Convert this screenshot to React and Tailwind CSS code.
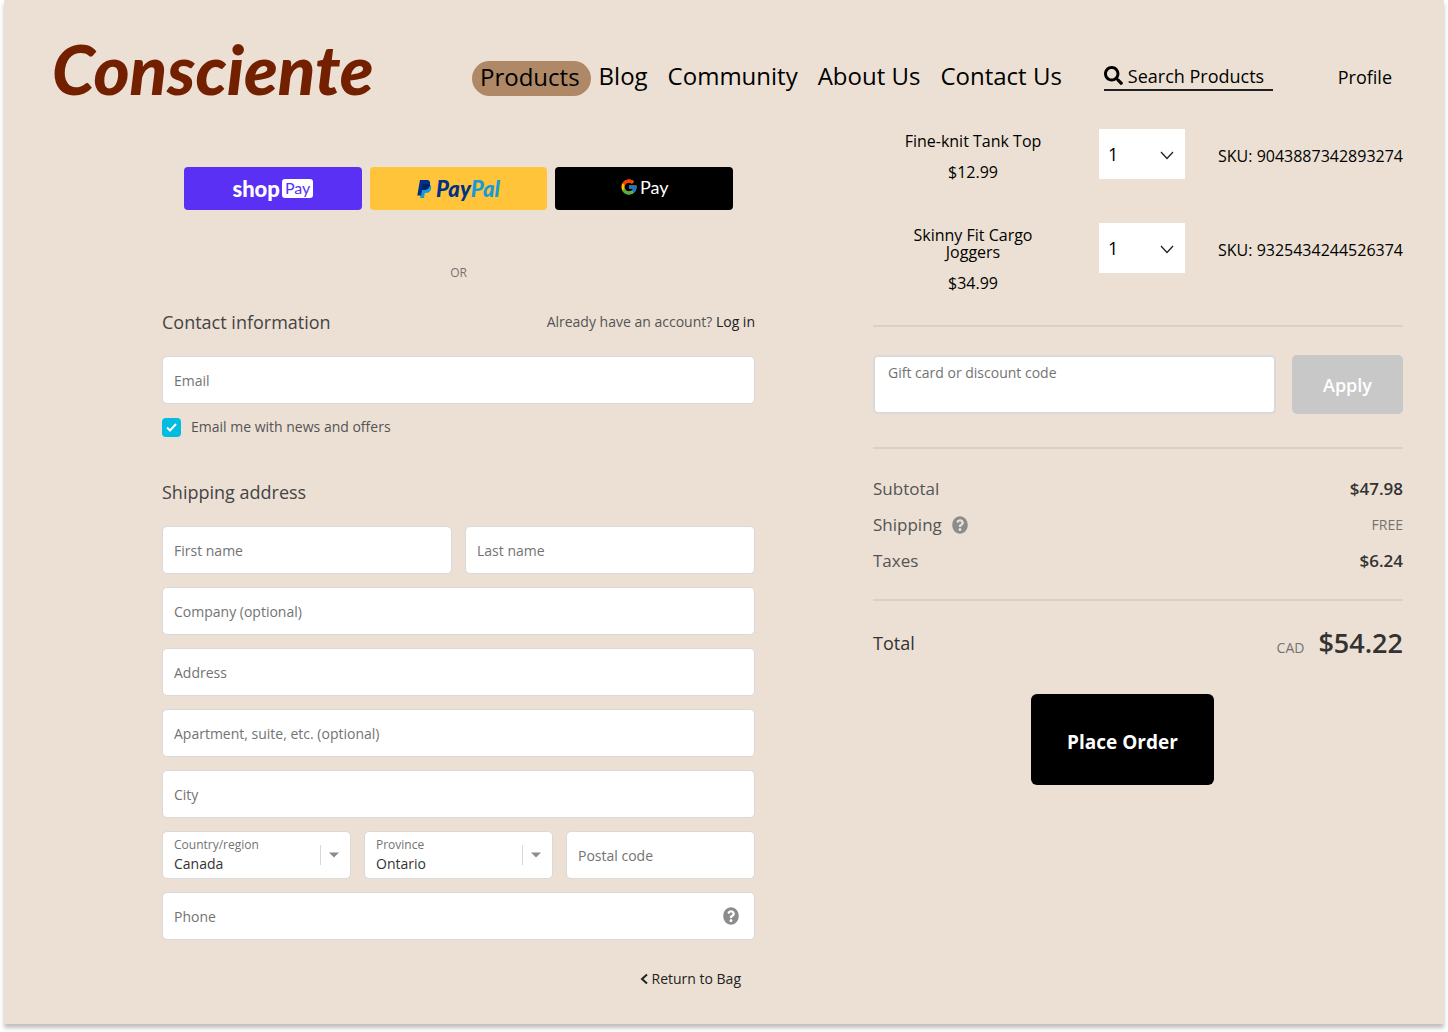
import React, { useState } from 'react';
import { FaSearch, FaQuestionCircle } from 'react-icons/fa';
import { FcGoogle } from 'react-icons/fc';

const links = ['Blog', 'Community', 'About Us', 'Contact Us'];

const items = [
  { name: 'Fine-knit Tank Top', price: '$12.99', sku: '9043887342893274' },
  { name: 'Skinny Fit Cargo Joggers', price: '$34.99', sku: '9325434244526374' },
];

function Help() {
  return (
    <FaQuestionCircle preserveAspectRatio="none" className="w-4 h-[18px] text-[#8c8c8c]" />
  );
}

function Field({ label, id, type = 'text' }) {
  return (
    <input
      id={id}
      type={type}
      aria-label={label}
      placeholder={label}
      className="block w-full h-12 px-[11px] text-sm rounded-[5px] border border-[#d9d9d9] bg-white text-[#333333] placeholder-[#737373] outline-none"
    />
  );
}

function SelectField({ label, id, options }) {
  return (
    <div className="relative">
      <label htmlFor={id} className="absolute left-3 top-[6px] text-xs text-[#737373]">{label}</label>
      <select
        id={id}
        className="appearance-none block w-full h-12 pl-[11px] pr-10 pt-[18px] text-sm rounded-[5px] border border-[#d9d9d9] bg-white text-[#333333] outline-none"
      >
        {options.map((o) => <option key={o}>{o}</option>)}
      </select>
      <div className="absolute right-3 top-[14px] h-5 pl-2 border-l border-[#d9d9d9] flex items-center pointer-events-none">
        <svg width="10" height="6" viewBox="0 0 10 6" fill="#8c8c8c"><path d="M0 0.5h10L5 5.5z" /></svg>
      </div>
    </div>
  );
}

function PayPalMark() {
  return (
    <svg width="15" height="18" viewBox="0 0 15 18">
      <path d="M5 4h6.5C14 4.500 14.500 6.500 14 9c-.6 2.800-2.400 4-5 4H7.800L7 18H3.200z" fill="#179bd7" />
      <path d="M3 0h6.500C12.500 0 13.500 2 13 4.800 12.400 8.500 10 9.800 7 9.800H5.200L4.100 15.500H0.300z" fill="#003087" />
      <path d="M5.600 4.300h6.600c.5 0 .7.300.6.900C12.200 8.500 10 9.800 7 9.800H4.800z" fill="#001f66" />
    </svg>
  );
}

function Header() {
  return (
    <header className="flex items-center h-[129px] pt-6 pl-[48px] pr-[52px] text-black whitespace-nowrap">
      <a href="#" className="w-[420px] pb-4 font-['Lato'] font-black italic text-[69px] leading-none text-[#732000]">Consciente</a>
      <nav className="flex items-start gap-2 pt-1 text-2xl">
        <a href="#" className="h-[35px] pl-2 pr-[11px] leading-8 rounded-full bg-[#af8867]">Products</a>
        <div className="flex gap-5 leading-[30px]">
          {links.map((l) => <a key={l} href="#">{l}</a>)}
        </div>
      </nav>
      <div className="ml-[42px] w-[169px] h-7 flex items-center gap-[5px] border-b-2 border-[#222222]">
        <FaSearch className="size-[19px] shrink-0" />
        <input type="text" aria-label="Search Products" placeholder="Search Products" className="w-full min-w-0 text-lg leading-6 placeholder-black outline-none bg-transparent" />
      </div>
      <a href="#" className="ml-auto text-lg">Profile</a>
    </header>
  );
}

function Checkout() {
  const [news, setNews] = useState(true);

  return (
    <form className="pt-[33px] text-sm text-[#545454]" onSubmit={(e) => e.preventDefault()}>
      <div className="grid grid-cols-3 gap-2 px-[21px] pt-[5px] pb-[22px] rounded-b-[5px] border border-t-0 border-[#e5e1dd]">
        <button type="button" className="h-[43px] flex items-center justify-center gap-[2px] rounded-[4px] bg-[#5a31f4] font-['Lato'] text-white">
          <span className="text-[22px] leading-5 font-black">shop</span>
          <span className="px-[3px] h-[19px] leading-[18px] text-base rounded-[3px] bg-white text-[#5a31f4]">Pay</span>
        </button>
        <button type="button" aria-label="PayPal" className="h-[43px] flex items-center justify-center gap-1 rounded-[4px] bg-[#ffc439] font-['Lato'] font-black italic text-[22px]">
          <PayPalMark />
          <span className="text-[#003087]">Pay<span className="text-[#179bd7]">Pal</span></span>
        </button>
        <button type="button" className="h-[43px] pb-1 flex items-center justify-center gap-[2px] rounded-[4px] bg-black font-['Lato'] text-lg text-white">
          <FcGoogle className="size-[18px]" />
          <span>Pay</span>
        </button>
      </div>

      <div className="mt-8 flex items-center gap-3 text-xs text-[#737373]">
        <span className="flex-1 border-t border-[#e5e1dd]" />
        OR
        <span className="flex-1 border-t border-[#e5e1dd]" />
      </div>

      <div className="mt-[27px] mb-5 flex items-center justify-between">
        <h2 className="text-lg text-[#444444]">Contact information</h2>
        <p>Already have an account? <a href="#" className="text-[#222222]">Log in</a></p>
      </div>
      <Field id="email" label="Email" type="email" />
      <div className="mt-[13px] flex items-center gap-[10px]">
        <span className="relative size-[19px]">
          <input id="news" type="checkbox" checked={news} onChange={() => setNews(!news)} className="block appearance-none size-[19px] rounded-[4px] bg-[#c8c8c8] checked:bg-[#00bce0]" />
          {news && (
            <svg viewBox="0 0 19 19" className="absolute inset-0 pointer-events-none" fill="none" stroke="#fff" strokeWidth="2"><path d="M5 9.500l3 3 6-6.500" /></svg>
          )}
        </span>
        <label htmlFor="news">Email me with news and offers</label>
      </div>

      <h2 className="mt-[41px] mb-5 text-lg text-[#444444]">Shipping address</h2>
      <div className="grid gap-[13px]">
        <div className="grid grid-cols-2 gap-[13px]">
          <Field id="first" label="First name" />
          <Field id="last" label="Last name" />
        </div>
        <Field id="company" label="Company (optional)" />
        <Field id="address" label="Address" />
        <Field id="apt" label="Apartment, suite, etc. (optional)" />
        <Field id="city" label="City" />
        <div className="grid grid-cols-3 gap-[13px]">
          <SelectField id="country" label="Country/region" options={['Canada', 'United States']} />
          <SelectField id="province" label="Province" options={['Ontario', 'Quebec']} />
          <Field id="postal" label="Postal code" />
        </div>
        <div className="relative">
          <Field id="phone" label="Phone" type="tel" />
          <span className="absolute right-4 top-[15px]"><Help /></span>
        </div>
      </div>
      <a href="#" className="mt-[29px] mr-[14px] flex items-center justify-end gap-1 text-[#222222]">
        <svg width="8" height="12" viewBox="0 0 8 12" fill="none" stroke="currentColor" strokeWidth="2"><path d="M7 1.500L2 6l5 4.500" /></svg>
        Return to Bag
      </a>
    </form>
  );
}

function Summary() {
  return (
    <aside className="text-[17px] leading-6 text-[#545454]">
      <div className="grid gap-[40px] text-base text-black">
        {items.map((item) => (
          <div key={item.sku} className="flex items-start justify-between">
            <div className="w-[200px] px-5 pt-1 text-center leading-[17px]">
              <p>{item.name}</p>
              <p className="mt-[14px]">{item.price}</p>
            </div>
            <div className="relative">
              <select aria-label={'Quantity of ' + item.name} className="appearance-none block w-[86px] h-[50px] px-[9px] text-lg font-medium bg-white outline-none">
                <option>1</option>
                <option>2</option>
              </select>
              <svg className="absolute right-[11px] top-[22px] pointer-events-none" width="14" height="9" viewBox="0 0 14 9" fill="none" stroke="#222" strokeWidth="1.300"><path d="M1 1l6 6.500L13 1" /></svg>
            </div>
            <p className="w-[192px] h-[54px] flex items-center justify-end">SKU: {item.sku}</p>
          </div>
        ))}
      </div>

      <div className="mt-[33px] pt-7 pb-[33px] flex gap-4 border-y-2 border-[#d9d0c8]">
        <input aria-label="Gift card or discount code" placeholder="Gift card or discount code" className="flex-1 min-w-0 h-[59px] px-[13px] pb-6 text-sm rounded-[5px] border-2 border-[#d9d9d9] bg-white placeholder-[#737373] outline-none" />
        <button className="w-[111px] h-[59px] rounded-[5px] bg-[#c8c8c8] text-lg font-semibold text-white">Apply</button>
      </div>

      <dl className="pt-7 pb-[26px] grid gap-3 border-b-2 border-[#d9d0c8]">
        <div className="flex items-center justify-between">
          <dt>Subtotal</dt>
          <dd className="font-semibold text-[#333333]">$47.98</dd>
        </div>
        <div className="flex items-center justify-between">
          <dt className="flex items-center gap-[10px]">Shipping <Help /></dt>
          <dd className="text-sm text-[#737373]">FREE</dd>
        </div>
        <div className="flex items-center justify-between">
          <dt>Taxes</dt>
          <dd className="font-semibold text-[#333333]">$6.24</dd>
        </div>
      </dl>

      <div className="mt-6 flex items-center justify-between text-[#333333]">
        <span className="text-lg">Total</span>
        <span className="flex items-baseline gap-[14px]">
          <span className="text-sm text-[#737373]">CAD</span>
          <span className="text-[27px] leading-9 font-semibold">$54.22</span>
        </span>
      </div>
      <button className="block mt-[33px] ml-[158px] w-[183px] h-[91px] pt-1 rounded-[6px] bg-black text-[19px] font-bold text-white">Place Order</button>
    </aside>
  );
}

export default function App() {
  return (
    <div className="bg-white pb-2 px-1 font-['Open_Sans',sans-serif]">
      <div className="min-h-[1024px] bg-[#ece0d4] shadow-[0_4px_4px_rgba(0,0,0,0.25)]">
        <Header />
        <main className="grid grid-cols-[593fr_530fr] gap-[118px] pl-[158px] pr-[41px]">
          <Checkout />
          <Summary />
        </main>
      </div>
    </div>
  );
}
